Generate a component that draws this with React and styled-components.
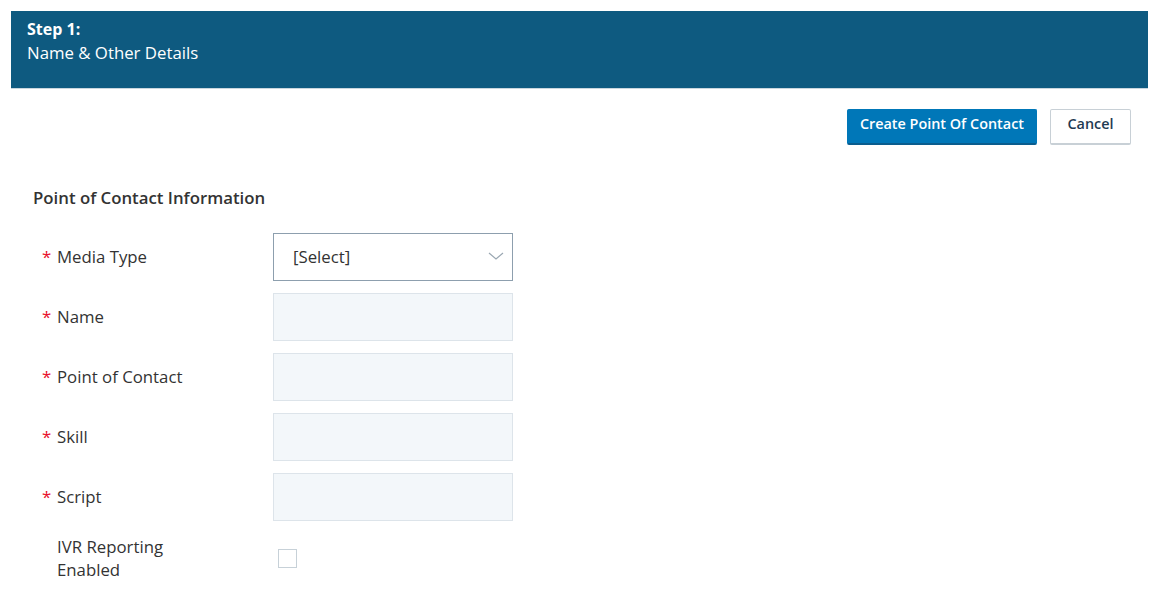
import React from 'react';
import styled, { createGlobalStyle } from 'styled-components';

const GlobalStyle = createGlobalStyle`
  body {
    margin: 0;
    font-family: 'Open Sans', 'Liberation Sans', sans-serif;
    color: #333;
    background: #fff;
  }
`;

const Page = styled.div`
  padding: 11px 3px 0 11px;
`;

const Header = styled.div`
  background: #0e5a80;
  color: #fff;
  border-bottom: 1px solid #c9d6de;
  padding: 6px 16px 0 16px;
  box-sizing: border-box;
  height: 78px;
  font-size: 16.8px;
  line-height: 24px;
`;

const StepTitle = styled.div`
  font-weight: 700;
  font-size: 16px;
`;

const Actions = styled.div`
  display: flex;
  align-items: flex-start;
  justify-content: flex-end;
  gap: 13px;
  height: 36px;
  padding: 20px 17px 0 0;
`;

const Button = styled.button`
  font-family: inherit;
  font-size: 14.4px;
  font-weight: 600;
  height: 36px;
  min-width: 81px;
  box-sizing: border-box;
  padding: 0 12px 7px;
  border-radius: 2px;
  cursor: pointer;
  color: ${p => (p.$primary ? '#fff' : '#1f3a52')};
  background: ${p => (p.$primary ? '#0077b8' : '#fff')};
  border: 1px solid ${p => (p.$primary ? '#0077b8' : '#c8d0d6')};
  border-bottom: 2px solid ${p => (p.$primary ? '#0a5d8e' : '#c8d0d6')};
`;

const Section = styled.div`
  padding: 41px 0 0 22px;
`;

const SectionTitle = styled.div`
  font-size: 16.8px;
  font-weight: 600;
  color: #333;
  line-height: 24px;
  margin-bottom: 23px;
`;

const Row = styled.div`
  display: flex;
  align-items: center;
  min-height: 48px;
  margin-bottom: 12px;
`;

const Label = styled.div`
  width: 240px;
  display: flex;
  align-items: flex-start;
  font-size: 16.8px;
  line-height: 23px;
  color: #333;
  padding: ${p => (p.$multi ? '2px 0 2px 9px' : '0 0 2px 9px')};
  box-sizing: border-box;
`;

const Star = styled.span`
  color: #e8102b;
  width: 15px;
  flex: none;
`;

const LabelText = styled.span`
  max-width: 130px;
`;

const Input = styled.div`
  width: 240px;
  height: 48px;
  box-sizing: border-box;
  background: #f3f7fa;
  border: 1px solid #dde4ea;
`;

const Select = styled.div`
  width: 240px;
  height: 48px;
  box-sizing: border-box;
  background: #fff;
  border: 1px solid #8d9fae;
  display: flex;
  align-items: center;
  justify-content: space-between;
  padding: 0 8px 2px 19px;
  font-size: 16.8px;
  color: #333;
`;

const Checkbox = styled.div`
  width: 19px;
  height: 19px;
  box-sizing: border-box;
  border: 1px solid #c7d1d8;
  background: #fff;
  margin-left: 5px;
`;

const fields = ['Name', 'Point of Contact', 'Skill', 'Script'];

export default function App() {
  return (
    <>
      <GlobalStyle />
      <Page>
        <Header>
          <StepTitle>Step 1:</StepTitle>
          <div>Name &amp; Other Details</div>
        </Header>
        <Actions>
          <Button $primary>Create Point Of Contact</Button>
          <Button>Cancel</Button>
        </Actions>
        <Section>
          <SectionTitle>Point of Contact Information</SectionTitle>
          <Row>
            <Label>
              <Star>*</Star>
              <LabelText>Media Type</LabelText>
            </Label>
            <Select>
              <span>[Select]</span>
              <svg width="16" height="10" viewBox="0 0 16 10" fill="none">
                <path d="M1 2l7 6 7-6" stroke="#9aa7b2" strokeWidth="1.2" />
              </svg>
            </Select>
          </Row>
          {fields.map(f => (
            <Row key={f}>
              <Label>
                <Star>*</Star>
                <LabelText>{f}</LabelText>
              </Label>
              <Input />
            </Row>
          ))}
          <Row>
            <Label $multi>
              <Star />
              <LabelText>IVR Reporting Enabled</LabelText>
            </Label>
            <Checkbox />
          </Row>
        </Section>
      </Page>
    </>
  );
}
